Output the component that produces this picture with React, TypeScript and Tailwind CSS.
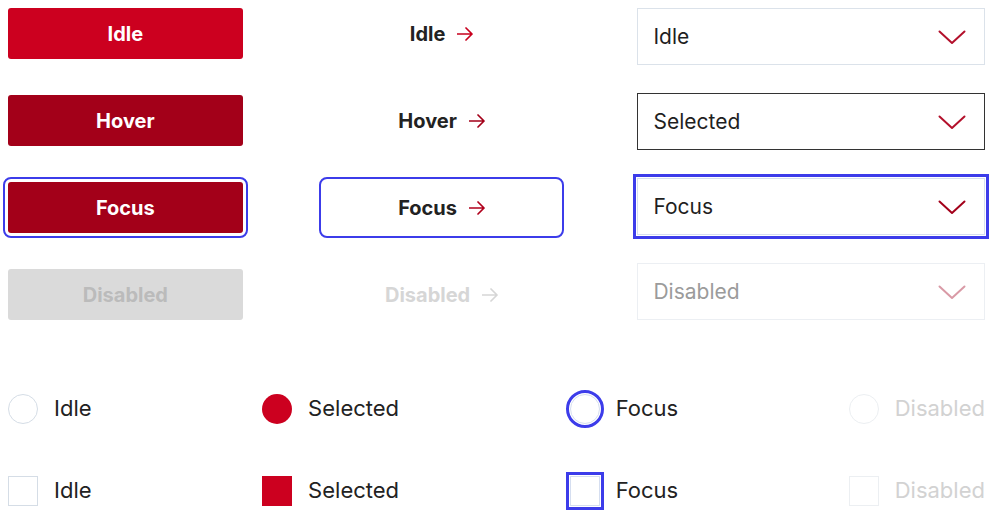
import React from "react";

const font = { fontFamily: "Inter, 'Noto Sans', sans-serif" };

function Arrow({ color }: { color: string }) {
  return (
    <svg width="16" height="14" viewBox="0 0 16 14" fill="none" className="ml-3">
      <path d="M0.5 7H15M9 1l6 6-6 6" stroke={color} strokeWidth="1.7" strokeLinecap="round" strokeLinejoin="round" />
    </svg>
  );
}

function Chevron({ color }: { color: string }) {
  return (
    <svg width="28" height="15" viewBox="0 0 28 15" fill="none">
      <path d="M1.5 1.5L14 13L26.5 1.5" stroke={color} strokeWidth="2" strokeLinecap="round" strokeLinejoin="round" />
    </svg>
  );
}

const buttons = [
  { label: "Idle", cls: "bg-[#cc001f] text-white" },
  { label: "Hover", cls: "bg-[#a30019] text-white" },
  { label: "Focus", cls: "bg-[#a30019] text-white outline-2 outline-offset-[3px] outline-[#3c3cea]" },
  { label: "Disabled", cls: "bg-[#dadada] text-[#bbbbbb]" },
];

const links = [
  { label: "Idle", text: "text-[#222222]", arrow: "#c8001e", cls: "" },
  { label: "Hover", text: "text-[#222222]", arrow: "#a30019", cls: "" },
  { label: "Focus", text: "text-[#222222]", arrow: "#b0001c", cls: "outline-2 outline-offset-[3px] outline-[#3c3cea]" },
  { label: "Disabled", text: "text-[#d6d6d6]", arrow: "#d6d6d6", cls: "" },
];

const selects = [
  { label: "Idle", cls: "border border-[#dbe2ea]", text: "text-[#1f1f1f]", chev: "#b3102b" },
  { label: "Selected", cls: "border-[1.5px] border-[#333333]", text: "text-[#1f1f1f]", chev: "#b3102b" },
  { label: "Focus", cls: "border border-[#d5def0] outline-[3px] outline-offset-1 outline-[#3c3cea]", text: "text-[#1f1f1f]", chev: "#a3001a" },
  { label: "Disabled", cls: "border border-[#eceff3]", text: "text-[#9b9b9b]", chev: "#d99aa6" },
];

export default function App() {
  return (
    <div className="bg-white w-[994px] h-[522px] pt-2 pl-2 pr-[9px] overflow-hidden" style={font}>
      <div className="flex">
        <div className="flex flex-col gap-[36px] w-[235px]">
          {buttons.map((b) => (
            <div key={b.label} className={`h-[51px] rounded-[3px] flex items-center justify-center text-[20px] font-bold ${b.cls}`}>
              {b.label}
            </div>
          ))}
        </div>
        <div className="flex flex-col gap-[36px] w-[236px] ml-[81px]">
          {links.map((l) => (
            <div key={l.label} className={`h-[51px] rounded-[3px] flex items-center justify-center text-[20px] font-bold ${l.text} ${l.cls}`}>
              {l.label}
              <Arrow color={l.arrow} />
            </div>
          ))}
        </div>
        <div className="flex flex-col gap-[28px] w-[348px] ml-[78px]">
          {selects.map((s) => (
            <div key={s.label} className={`h-[57px] flex items-center justify-between pl-[15px] pr-[18px] pt-px text-[21px] ${s.cls} ${s.text}`}>
              <span>{s.label}</span>
              <Chevron color={s.chev} />
            </div>
          ))}
        </div>
      </div>

      <div className="mt-[72px] flex justify-between items-center text-[22px] text-[#222222]">
        <div className="flex items-center gap-4">
          <div className="w-[30px] h-[30px] rounded-full border-[1.5px] border-[#d5dde6]" />
          <span>Idle</span>
        </div>
        <div className="flex items-center gap-4">
          <div className="w-[30px] h-[30px] rounded-full bg-[#cc001f]" />
          <span>Selected</span>
        </div>
        <div className="flex items-center gap-4">
          <div className="w-[30px] h-[30px] rounded-full border-[1.5px] border-[#d5def0] outline-[3px] outline-offset-1 outline-[#3c3cea]" />
          <span>Focus</span>
        </div>
        <div className="flex items-center gap-4 text-[#d2d2d2]">
          <div className="w-[30px] h-[30px] rounded-full border-[1.5px] border-[#eceff2]" />
          <span>Disabled</span>
        </div>
      </div>

      <div className="mt-[49px] flex justify-between items-center text-[22px] text-[#222222]">
        <div className="flex items-center gap-4">
          <div className="w-[30px] h-[30px] border-[1.5px] border-[#d5dde6]" />
          <span>Idle</span>
        </div>
        <div className="flex items-center gap-4">
          <div className="w-[30px] h-[30px] bg-[#cc001f]" />
          <span>Selected</span>
        </div>
        <div className="flex items-center gap-4">
          <div className="w-[30px] h-[30px] border-[1.5px] border-[#d5def0] outline-[3px] outline-offset-1 outline-[#3c3cea]" />
          <span>Focus</span>
        </div>
        <div className="flex items-center gap-4 text-[#d2d2d2]">
          <div className="w-[30px] h-[30px] border-[1.5px] border-[#eceff2]" />
          <span>Disabled</span>
        </div>
      </div>
    </div>
  );
}
